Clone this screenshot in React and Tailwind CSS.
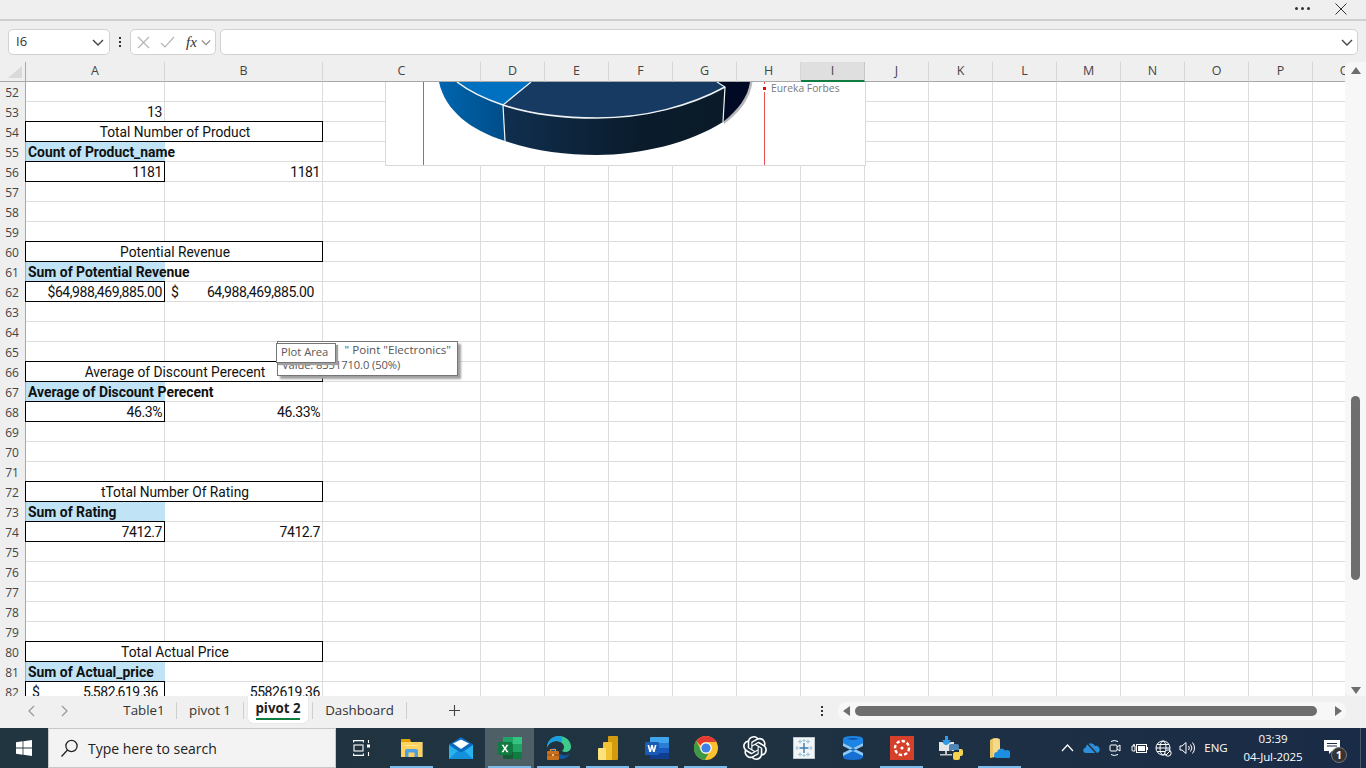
import React from "react";
import { SiOpenai } from "react-icons/si";

const COLS = ["A","B","C","D","E","F","G","H","I","J","K","L","M","N","O","P","Q"];
const sheet = "font-['Roboto',sans-serif] text-[14px] text-[#111]";
const ui = "font-['Open_Sans',sans-serif]";
const grid = "border-r border-b border-[#dcdcdc]";
const boxed = "border border-black -mt-px -ml-px relative z-10";

const Merged = ({ children }) => (
  <div className={`col-span-2 flex items-center justify-center pt-[2px] pl-[2px] text-[13.75px] ${boxed}`}>{children}</div>
);
const Label = ({ children }) => (
  <div className="bg-[#c0e4f5] border-b border-[#c0e4f5] flex items-center pl-[2px] pt-[2px] font-bold text-[13.9px] whitespace-nowrap relative z-10 overflow-visible">{children}</div>
);
const Val = ({ children, box, dollar, pad = "pr-[2px]" }) => (
  <div className={`flex items-center justify-end pt-[2px] tracking-[-0.42px] ${pad} whitespace-nowrap relative ${box ? boxed : grid}`}>
    {dollar && <span className={`absolute ${dollar}`}>$</span>}
    {children}
  </div>
);
const Empty = () => <div className={grid} />;

const rowData = {
  52: [null, null],
  53: [<Val key="a">13</Val>, null],
  54: "Total Number of Product",
  55: [<Label key="a">Count of Product_name</Label>, null],
  56: [<Val key="a" box>1181</Val>, <Val key="b">1181</Val>],
  60: "Potential Revenue",
  61: [<Label key="a">Sum of Potential Revenue</Label>, null],
  62: [<Val key="a" box>$64,988,469,885.00</Val>, <Val key="b" dollar="left-[6px]" pad="pr-[8px]">64,988,469,885.00</Val>],
  66: "Average of Discount Perecent",
  67: [<Label key="a">Average of Discount Perecent</Label>, null],
  68: [<Val key="a" box>46.3%</Val>, <Val key="b">46.33%</Val>],
  72: "tTotal Number Of Rating",
  73: [<Label key="a">Sum of Rating</Label>, null],
  74: [<Val key="a" box>7412.7</Val>, <Val key="b">7412.7</Val>],
  80: "Total Actual Price",
  81: [<Label key="a">Sum of Actual_price</Label>, null],
  82: [<Val key="a" box dollar="left-[6px]" pad="pr-[6px]">5,582,619.36</Val>, <Val key="b">5582619.36</Val>],
};

function Row({ n }) {
  const d = rowData[n];
  return (
    <>
      <div className={`bg-[#efefef] border-r border-[#a8a8a8] flex items-center justify-center pt-[2px] pr-[1px] text-[12px] text-[#444] ${ui}`}>{n}</div>
      {typeof d === "string" ? (
        <Merged>{d}</Merged>
      ) : (
        <>
          {d && d[0] ? d[0] : <Empty />}
          {d && d[1] ? d[1] : <Empty />}
        </>
      )}
      {COLS.slice(2).map((c) => (
        <Empty key={c} />
      ))}
    </>
  );
}

function Chart() {
  const sideL = "M439 82 C445 110 470 130 505 141 L503 105 C485 99 470 92 457 82 Z";
  const sideM = "M505 141 C535 151 565 155 597 155 C640 155 690 143 723 122 L725 87 C690 106 645 118 597 118 C563 118 530 114 503 105 Z";
  const sideR = "M723 122 C738 110 748 97 750 82 L717 82 L725 87 Z";
  const topL = "M457 82 C470 92 485 99 503 105 L531 82 Z";
  const topM = "M531 82 L503 105 C530 114 563 118 597 118 C645 118 690 106 725 87 L717 82 Z";
  return (
    <div className="absolute left-[385px] top-[20px] w-[481px] h-[84px] bg-white border border-t-0 border-[#d9d9d9] overflow-hidden z-20">
      <svg viewBox="385 82 481 84" width="481" height="84" className="absolute -left-px top-0">
        <defs>
          <linearGradient id="gl" x1="0" x2="1" y1="0" y2="0">
            <stop offset="0" stopColor="#0066b0" />
            <stop offset="1" stopColor="#004d88" />
          </linearGradient>
          <linearGradient id="gm" x1="0" x2="1" y1="0" y2="0">
            <stop offset="0" stopColor="#102f4f" />
            <stop offset="0.6" stopColor="#0a1c2c" />
            <stop offset="1" stopColor="#0a1a28" />
          </linearGradient>
        </defs>
        <line x1="423.5" y1="82" x2="423.5" y2="166" stroke="#e4504f" />
        <line x1="764.5" y1="82" x2="764.5" y2="166" stroke="#e4504f" />
        <path d="M724 124 C740 112 750 99 752.5 82 L750 82 L723 120 Z" fill="#b8b8b8" />
        <path d={sideL} fill="url(#gl)" />
        <path d={sideM} fill="url(#gm)" />
        <path d={sideR} fill="#000a24" />
        <path d={topL} fill="#0070c0" />
        <path d={topM} fill="#163a61" />
        <g fill="none" stroke="#eef2f5" strokeWidth="1.2">
          <path d="M457 82 C470 92 485 99 503 105 C530 114 563 118 597 118 C645 118 690 106 725 87" strokeWidth="1.5" />
          <path d="M531 82 L503 105 L505 141" />
          <path d="M717 82 L725 87 L723 122" />
        </g>
        <rect x="762" y="84" width="5" height="8" fill="#fff" />
        <rect x="763" y="87" width="3" height="3" fill="#f00" />
      </svg>
      <span className={`absolute left-[385px] top-[-1px] text-[10.3px] leading-[14px] text-[#7a7a7a] ${ui} whitespace-nowrap`}>Eureka Forbes</span>
    </div>
  );
}

function Tooltips() {
  const f = `${ui} text-[11.2px] leading-[15px] text-[#575757] whitespace-nowrap`;
  return (
    <>
      <div className={`absolute left-[277px] top-[279px] w-[181px] h-[35px] bg-white border border-[#767676] shadow-[3px_3px_2px_#a0a0a0] z-30 ${f}`}>
        <div className="text-right pr-[6px] text-[11.6px]">" Point "Electronics"</div>
        <div className="pl-[4px] tracking-[-0.1px]">Value: 8351710.0 (50%)</div>
      </div>
      <div className={`absolute left-[276px] top-[281px] w-[60px] h-[20px] bg-white border border-[#767676] shadow-[2px_2px_1px_#a0a0a0] z-40 pl-[4px] ${f}`}>
        Plot Area
      </div>
    </>
  );
}

const Tri = ({ d, cls = "#6e6e6e" }) => (
  <svg width="12" height="12" viewBox="0 0 12 12"><path d={d} fill={cls} /></svg>
);

function TopBar() {
  return (
    <div className="h-[21px] shrink-0 bg-[#efefef] border-b-2 border-[#cfcfcf] flex items-center justify-end">
      <div className="flex gap-[3px] mr-[25px] mb-[2px]">
        <i className="w-[3px] h-[3px] rounded-full bg-[#333]" />
        <i className="w-[3px] h-[3px] rounded-full bg-[#333]" />
        <i className="w-[3px] h-[3px] rounded-full bg-[#333]" />
      </div>
      <svg width="12" height="12" viewBox="0 0 12 12" className="mr-[19px] mb-[1px]">
        <path d="M.5.5l11 11M11.5.5l-11 11" stroke="#333" strokeWidth="1" />
      </svg>
    </div>
  );
}

const Chev = ({ c = "#444", w = 12 }) => (
  <svg width={w} height="7" viewBox="0 0 12 7"><path d="M1 1l5 5 5-5" fill="none" stroke={c} strokeWidth="1.4" /></svg>
);

function FormulaBar() {
  return (
    <div className={`h-[41px] shrink-0 bg-[#efefef] flex items-center pl-[8px] pr-[8px] ${ui} pt-[1px]`}>
      <div className="w-[102px] h-[26px] bg-white border border-[#d2d2d2] rounded-[5px] flex items-center justify-between pl-[7px] pr-[5px] text-[13px] text-[#333]">
        I6 <Chev />
      </div>
      <div className="w-[20px] flex flex-col items-center gap-[2px]">
        <i className="w-[2px] h-[2px] bg-[#333]" /><i className="w-[2px] h-[2px] bg-[#333]" /><i className="w-[2px] h-[2px] bg-[#333]" />
      </div>
      <div className="w-[86px] h-[26px] bg-white border border-[#d2d2d2] rounded-[5px] flex items-center pl-[6px] gap-[10px]">
        <svg width="13" height="13" viewBox="0 0 13 13"><path d="M1 1l11 11M12 1L1 12" stroke="#b5b5b5" strokeWidth="1.2" /></svg>
        <svg width="15" height="12" viewBox="0 0 15 12"><path d="M1 7l4 4L14 1" fill="none" stroke="#b5b5b5" strokeWidth="1.2" /></svg>
        <span className="font-['Liberation_Serif',serif] italic text-[15px] text-[#333] ml-[1px] -mr-[6px]">fx</span>
        <Chev c="#888" w={10} />
      </div>
      <div className="ml-[4px] flex-1 h-[26px] bg-white border border-[#d2d2d2] rounded-[5px] flex items-center justify-end pr-[4px]">
        <Chev />
      </div>
    </div>
  );
}

function VScroll() {
  return (
    <div className="w-[21px] shrink-0 bg-[#f7f7f7] rounded-l-[6px] flex flex-col items-center pt-[3px] justify-between relative">
      <Tri d="M6 2l5 7H1z" />
      <div className="absolute left-[6px] top-[334px] w-[9px] h-[184px] bg-[#6e6e6e] rounded-full" />
      <Tri d="M6 10L1 3h10z" />
    </div>
  );
}

const Sep = ({ cls = "" }) => <div className={`w-px h-[17px] bg-[#cfcfcf] shrink-0 ${cls}`} />;
const Tab = ({ w, children }) => (
  <div className={`${w} shrink-0 flex justify-center text-[13.3px] text-[#333] whitespace-nowrap`}>{children}</div>
);

function TabBar() {
  return (
    <div className={`h-[32px] shrink-0 bg-[#f0f0f0] flex items-center pb-[3px] ${ui}`}>
      <div className="w-[112px] shrink-0 pl-[27px] pr-[43px] flex justify-between">
        <svg width="9" height="12" viewBox="0 0 9 12"><path d="M7 1L2 6l5 5" fill="none" stroke="#9b9b9b" strokeWidth="1.3" /></svg>
        <svg width="9" height="12" viewBox="0 0 9 12"><path d="M2 1l5 5-5 5" fill="none" stroke="#9b9b9b" strokeWidth="1.3" /></svg>
      </div>
      <Tab w="w-[64px]">Table1</Tab>
      <Sep />
      <Tab w="w-[66px]">pivot 1</Tab>
      <Sep />
      <div className="relative self-start shrink-0 ml-[4px] w-[60px] h-[27px] bg-white rounded-b-[5px] shadow-[0_0_1px_#bbb] flex justify-center">
        <span className="text-[13.3px] font-bold text-[#222] leading-[24px]">pivot 2</span>
        <i className="absolute left-[8px] right-[8px] bottom-[3px] h-[2px] bg-[#107c41]" />
      </div>
      <Sep cls="ml-[4px]" />
      <Tab w="w-[93px]">Dashboard</Tab>
      <Sep />
      <svg width="13" height="13" viewBox="0 0 13 13" className="ml-[41px] shrink-0"><path d="M6.5 1v11M1 6.5h11" stroke="#444" strokeWidth="1.1" /></svg>
      <div className="ml-[360px] flex flex-col gap-[2px] shrink-0">
        <i className="w-[2px] h-[2px] bg-[#333]" /><i className="w-[2px] h-[2px] bg-[#333]" /><i className="w-[2px] h-[2px] bg-[#333]" />
      </div>
      <div className="ml-[15px] w-[508px] h-[18px] shrink-0 bg-[#f7f7f7] rounded-[8px] flex items-center pl-[3px]">
        <Tri d="M2 6l7-5v10z" />
        <div className="ml-[2px] w-[462px] h-[10px] bg-[#6e6e6e] rounded-full shrink-0" />
        <div className="ml-[15px]"><Tri d="M10 6L3 1v10z" /></div>
      </div>
    </div>
  );
}

/* ---- taskbar icons ---- */
const WinLogo = () => (
  <svg width="16" height="16" viewBox="0 0 16 16" fill="#fff"><path d="M0 2.2L6.6 1.3v6.3H0zM7.4 1.2L16 0v7.6H7.4zM0 8.4h6.6v6.3L0 13.8zM7.4 8.4H16V16l-8.6-1.2z" /></svg>
);
const TaskView = () => (
  <svg width="17" height="16" viewBox="0 0 17 16" fill="none" stroke="#fff" strokeWidth="1.1">
    <path d="M0 .6h11M.6 .6v2M10.4 .6v2M0 15.4h11M.6 15.4v-2M10.4 15.4v-2" /><rect x="1" y="5" width="9" height="6" />
    <path d="M15.5 0v3M15.5 12v4" /><rect x="14" y="4.5" width="3" height="3" fill="#fff" stroke="none" />
  </svg>
);
const Explorer = () => (
  <svg width="22" height="18" viewBox="0 0 22 18">
    <path d="M0 0h9l1 3H0z" fill="#e2a200" />
    <rect x="0" y="3" width="22" height="15" fill="#fcd35f" />
    <rect x="21" y="3" width="1" height="15" fill="#a69a72" />
    <path d="M4 6h13v1H4z" fill="#fff3c4" opacity=".6" />
    <path d="M4 18v-6a2 2 0 0 1 2-2h9a2 2 0 0 1 2 2v6h-3.5v-4.5h-6V18z" fill="#4da0e2" />
  </svg>
);
const Mail = () => (
  <svg width="24" height="22" viewBox="0 0 24 22">
    <path d="M0 7.5L12 0l12 7.5V22H0z" fill="#0a6cc0" />
    <path d="M0 8l12 8 12-8v14H0z" fill="#29b3ee" />
    <path d="M0 22L9 13.5l3 2.5 3-2.5L24 22z" fill="#1590dc" />
    <path d="M4 6.5l8-4 8 4L12 12z" fill="#fff" />
  </svg>
);
const Excel = () => (
  <svg width="24" height="22" viewBox="0 0 24 22">
    <rect x="5" y="0" width="10" height="7" fill="#21a366" />
    <rect x="15" y="0" width="9" height="7" fill="#33c481" />
    <rect x="5" y="7" width="10" height="8" fill="#107c41" />
    <rect x="15" y="7" width="9" height="8" fill="#21a366" />
    <rect x="5" y="15" width="10" height="7" fill="#185c37" />
    <rect x="15" y="15" width="9" height="7" fill="#107c41" />
    <rect x="0" y="5" width="14" height="13" rx="1" fill="#0f7b40" />
    <path d="M3.6 7.8h2l1.4 2.6 1.4-2.6h2L8 11.5l2.5 3.7h-2L7 12.6l-1.5 2.6h-2L6 11.5z" fill="#fff" />
  </svg>
);
const Word = () => (
  <svg width="24" height="22" viewBox="0 0 24 22">
    <rect x="5" y="0" width="19" height="6" rx="1" fill="#41a5ee" />
    <rect x="5" y="6" width="19" height="5" fill="#2b7cd3" />
    <rect x="5" y="11" width="19" height="5" fill="#185abd" />
    <rect x="5" y="16" width="19" height="6" rx="1" fill="#103f91" />
    <rect x="0" y="5" width="14" height="13" rx="1" fill="#1a5bb8" />
    <path d="M2.5 8h1.7l.9 4.2L6.2 8h1.6l1.1 4.2.9-4.2h1.7l-1.8 7H8L7 11l-1 4H4.3z" fill="#fff" />
  </svg>
);
const Edge = () => (
  <svg width="24" height="24" viewBox="0 0 24 24">
    <path d="M12 0C5 0 0 5 0 12c1-4 5-7 9-7 5 0 8 3 8 6 0 2-1 3-2 4 3 2 9 1 9-4C24 5 19 0 12 0z" fill="#3dcb8c" />
    <path d="M12 0C5 0 0 5 0 12c1-4 5-7 9-7 2 0 3.5.3 5 1.2C16 4 16 1 12 0z" fill="#1b9de2" />
    <path d="M4 14c0 5 4 9 10 9 4 0 7-2 9-6-3 3-7 3-10 1-3-1-5-3-5-6-2 0-4 1-4 2z" fill="#0c5aa6" />
    <rect x="0" y="15" width="12" height="9" rx="1" fill="#c9701e" />
    <path d="M3.5 15v-1.5h5V15" fill="none" stroke="#d99a4d" strokeWidth="1.2" />
    <rect x="0" y="18.5" width="12" height="1" fill="#8f4a10" />
    <rect x="5" y="18" width="2" height="2" fill="#f2c078" />
  </svg>
);
const PowerBI = () => (
  <svg width="20" height="24" viewBox="0 0 20 24">
    <rect x="10" y="0" width="10" height="24" rx="1" fill="#d49b0e" />
    <rect x="5" y="6" width="9" height="18" rx="1" fill="#f2c230" />
    <rect x="0" y="12" width="8" height="12" rx="1" fill="#fbe27a" />
  </svg>
);
const Chrome = () => (
  <svg width="24" height="24" viewBox="0 0 24 24">
    <circle cx="12" cy="12" r="12" fill="#fbc02d" />
    <path d="M12 0a12 12 0 0 1 10.4 6H12a6 6 0 0 0-5.5 3.6L2.3 5A12 12 0 0 1 12 0z" fill="#e53935" />
    <path d="M2.3 5l4.9 9.5a6 6 0 0 0 7.2 3L10.8 24A12 12 0 0 1 2.3 5z" fill="#3c9a47" />
    <circle cx="12" cy="12" r="5.8" fill="#fff" />
    <circle cx="12" cy="12" r="4.6" fill="#3f7fe8" />
  </svg>
);
const Tableau = () => (
  <svg width="22" height="22" viewBox="0 0 22 22">
    <rect x=".5" y=".5" width="21" height="21" fill="#f2f4f6" stroke="#bfc8d0" />
    <path d="M7 2.5v4M5 4.5h4M15 2.5v4M13 4.5h4M7 15.5v4M5 17.5h4M15 15.5v4M13 17.5h4M4 9v4M2.5 11h3M18 9v4M16.5 11h3M11 2v3M9.5 3.5h3M11 17v3M9.5 18.5h3" stroke="#9cc3dd" strokeWidth="1.1" />
    <path d="M11 6v10M6.5 11h9" stroke="#3d7cb0" strokeWidth="1.4" />
  </svg>
);
const BlueApp = () => (
  <svg width="20" height="24" viewBox="0 0 20 24">
    <path d="M0 3q0-3 10-3t10 3v4l-10 5L0 7z" fill="#1b84e4" />
    <path d="M0 21q0 3 10 3t10-3v-4l-10-5-10 5z" fill="#1670d2" />
    <path d="M0 7l20 10v3L0 10zM20 7L0 17v3l20-10z" fill="#8ccbf8" />
    <path d="M4 3q6-1.8 12 0-6 1.5-12 0z" fill="#0e4f9e" />
  </svg>
);
const RedApp = () => (
  <svg width="24" height="24" viewBox="0 0 24 24">
    <rect width="24" height="24" fill="#d5402b" />
    <circle cx="12" cy="12" r="7" fill="none" stroke="#fff" strokeWidth="2.4" strokeDasharray="3.4 2" />
    <circle cx="12" cy="12" r="1.6" fill="#fff" />
  </svg>
);
const PyApp = () => (
  <svg width="24" height="24" viewBox="0 0 24 24">
    <path d="M6 0h3v4h3l-4.5 5L3 4h3z" fill="#2f9ce8" />
    <rect x="0" y="6" width="15" height="9" fill="#e6e6e6" />
    <path d="M6 9L3 6h9L8 9z" fill="#2f9ce8" />
    <path d="M6 15v3H1v1.5h12V18H8v-3z" fill="#c4c4c4" />
    <path d="M13 8h5a2 2 0 0 1 2 2v4h-7v1h-3v-5a2 2 0 0 1 2-2z" fill="#4f86b5" />
    <path d="M20 13h2a2 2 0 0 1 2 2v3a2 2 0 0 1-2 2h-1v2a2 2 0 0 1-2 2h-3a2 2 0 0 1-2-2v-4a2 2 0 0 1 2-2h4z" fill="#f5d34f" />
  </svg>
);
const FolderCloud = () => (
  <svg width="20" height="21" viewBox="0 0 20 21">
    <path d="M0 2l4-2 6 1v17L0 20z" fill="#e9c566" />
    <path d="M3 1l5-1 2 6v12H3z" fill="#f7d98a" />
    <path d="M7 20a3 3 0 0 1 0-6 4.5 4.5 0 0 1 8-1.500 3.7 3.7 0 0 1 4 7.500z" fill="#1d8fe1" />
  </svg>
);

const Slot = ({ children, on, w = "w-[49px]", active }) => (
  <div className={`${w} h-full relative flex items-center justify-center shrink-0 ${active ? "bg-[#4f5f66]" : ""}`}>
    {children}
    {on && <i className="absolute bottom-0 left-[3px] right-[3px] h-[2px] bg-[#7dbcea]" />}
  </div>
);
const T = ({ children, w = "w-[24px]" }) => (
  <div className={`${w} shrink-0 flex items-center justify-center`}>{children}</div>
);

function Taskbar() {
  return (
    <div className={`h-[40px] shrink-0 bg-gradient-to-r from-[#20353f] via-[#1f3341] to-[#1a2b47] flex items-stretch ${ui} text-white`}>
      <div className="w-[48px] flex items-center justify-center shrink-0"><WinLogo /></div>
      <div className="w-[288px] shrink-0 bg-[#f3f3f3] border border-[#c8c8c8] flex items-center pl-[11px] pt-[1px] gap-[9px] text-[#222] text-[14px]">
        <svg width="19" height="19" viewBox="0 0 19 19" fill="none" stroke="#222" strokeWidth="1.3"><circle cx="11.5" cy="7" r="5.6" /><path d="M7.5 11L1.5 17.5" /></svg>
        <span className="whitespace-nowrap">Type here to search</span>
      </div>
      <Slot w="w-[51px]"><TaskView /></Slot>
      <Slot on><Explorer /></Slot>
      <Slot><Mail /></Slot>
      <Slot on active><Excel /></Slot>
      <Slot on><Edge /></Slot>
      <Slot on><PowerBI /></Slot>
      <Slot on><Word /></Slot>
      <Slot on><Chrome /></Slot>
      <Slot><SiOpenai size={24} color="#fff" /></Slot>
      <Slot><Tableau /></Slot>
      <Slot><BlueApp /></Slot>
      <Slot on><RedApp /></Slot>
      <Slot><PyApp /></Slot>
      <Slot on><FolderCloud /></Slot>

      <div className="w-[31px] shrink-0" />
      <T><svg width="13" height="8" viewBox="0 0 13 8"><path d="M1 7l5.5-6L12 7" fill="none" stroke="#fff" strokeWidth="1.2" /></svg></T>
      <T><svg width="17" height="12" viewBox="0 0 17 12"><path d="M3 11a2.6 2.6 0 0 1-.4-5.2A5 5 0 0 1 12 4a3.6 3.6 0 0 1 2 7z" fill="#2c8fdc" /><path d="M3 0l11 12" stroke="#26323c" strokeWidth="1.5" /></svg></T>
      <T><svg width="12" height="18" viewBox="0 0 12 18" fill="none" stroke="#fff" strokeWidth="1"><rect x="1" y="6" width="7" height="6" rx="1" /><path d="M8 8l3-2v6l-3-2M2 2.5Q5 .5 9 2.5M2 15.5q3 2 7 0" /></svg></T>
      <T><svg width="17" height="11" viewBox="0 0 17 11"><path d="M1 3h2V1M3 1v2h1v5H2a1 1 0 0 1-1-1V3" fill="none" stroke="#fff" /><rect x="5.5" y="1.5" width="10" height="8" fill="none" stroke="#fff" /><rect x="7" y="3" width="7" height="5" fill="#fff" /><rect x="15.5" y="4" width="1.5" height="3" fill="#fff" /></svg></T>
      <T><svg width="17" height="17" viewBox="0 0 17 17" fill="none" stroke="#fff" strokeWidth="1"><circle cx="8" cy="8" r="7" /><ellipse cx="8" cy="8" rx="3" ry="7" /><path d="M1 8h14M2 4.5h12M2 11.5h12" /><circle cx="13" cy="13" r="3.2" fill="#1d2e43" /><path d="M11 15l4-4" /></svg></T>
      <T><svg width="17" height="14" viewBox="0 0 17 14" fill="none" stroke="#fff" strokeWidth="1"><path d="M1 5h2l4-3.5v11L3 9H1zM9.5 5a3 3 0 0 1 0 4M11.5 3.5a5.5 5.5 0 0 1 0 7M13.5 1.5a8.5 8.5 0 0 1 0 11" /></svg></T>
      <T w="w-[34px]"><span className="text-[11.5px]">ENG</span></T>
      <div className="w-[80px] shrink-0 flex flex-col items-center justify-center text-[11.5px] leading-[18px] tracking-[-0.1px]">
        <span>03:39</span>
        <span className="whitespace-nowrap">04-Jul-2025</span>
      </div>
      <div className="w-[38px] shrink-0 flex items-center justify-center relative">
        <svg width="16" height="14" viewBox="0 0 16 14" className="mb-[3px]"><path d="M0 0h16v11H8l-3 3v-3H0z" fill="#fff" /><path d="M3 3.5h10M3 6h10" stroke="#1d2e43" /></svg>
        <div className="absolute left-[18px] top-[19px] w-[16px] h-[16px] rounded-full bg-[#333] border border-[#777] text-[11px] font-bold leading-[14px] text-center">1</div>
      </div>
      <div className="w-[9px] shrink-0" />
      <div className="w-px shrink-0 bg-[#4a5a6a]" />
    </div>
  );
}

export default function App() {
  const rows = [];
  for (let n = 52; n <= 82; n++) rows.push(n);
  return (
    <div className="w-[1366px] h-[768px] overflow-hidden flex flex-col bg-white">
      <TopBar />
      <FormulaBar />
      <div className="h-[634px] shrink-0 flex overflow-hidden bg-[#efefef]">
        <div className="w-[1345px] relative overflow-hidden bg-white">
          <div className={`grid grid-cols-[26px_139px_158px_158px_repeat(14,64px)] auto-rows-[20px] ${sheet}`}>
            <div className="bg-[#efefef] border-r border-b border-[#a8a8a8] relative">
              <div className="absolute right-[3px] bottom-[3px] w-0 h-0 border-l-[14px] border-l-transparent border-b-[12px] border-b-[#d9d9d9]" />
            </div>
            {COLS.map((c) => (
              <div
                key={c}
                className={`flex items-center justify-center text-[12.5px] ${ui} text-[#444] border-r ${
                  c === "I" ? "bg-[#dfdfdf] border-b-2 border-b-[#107c41] border-r-[#c8c8c8]" : "bg-[#efefef] border-b border-b-[#a8a8a8] border-r-[#d6d6d6]"
                }`}
              >
                {c}
              </div>
            ))}
            {rows.map((n) => (
              <Row key={n} n={n} />
            ))}
          </div>
          <Chart />
          <Tooltips />
        </div>
        <VScroll />
      </div>
      <TabBar />
      <Taskbar />
    </div>
  );
}
